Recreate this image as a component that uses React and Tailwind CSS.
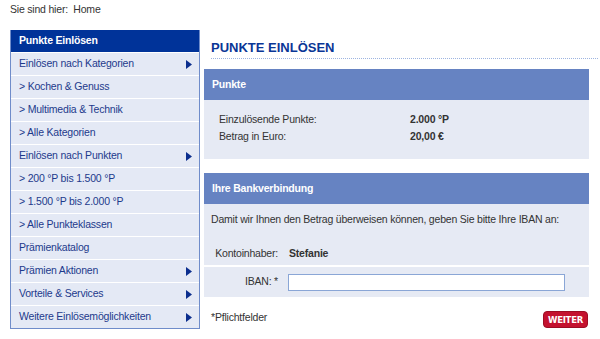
import React from 'react';

const menu = [
    { label: 'Einlösen nach Kategorien', arrow: true },
    { label: '> Kochen & Genuss' },
    { label: '> Multimedia & Technik' },
    { label: '> Alle Kategorien' },
    { label: 'Einlösen nach Punkten', arrow: true },
    { label: '> 200 °P bis 1.500 °P' },
    { label: '> 1.500 °P bis 2.000 °P' },
    { label: '> Alle Punkteklassen' },
    { label: 'Prämienkatalog' },
    { label: 'Prämien Aktionen', arrow: true },
    { label: 'Vorteile & Services', arrow: true },
    { label: 'Weitere Einlösemöglichkeiten', arrow: true },
];

const Arrow = () => (
    <svg width="6" height="9" viewBox="0 0 6 9" className="shrink-0">
        <path d="M0 0 L6 4.5 L0 9 Z" fill="#0b2e8e" />
    </svg>
);

const Sidebar = () => (
    <div className="w-[190px] shrink-0 border border-t-0 border-[#6f8cca]">
        <div className="h-[22px] bg-[#003399] pl-[8px] flex items-center text-white font-bold">
            Punkte Einlösen
        </div>
        {menu.map((item) => (
            <div
                key={item.label}
                className="h-[23px] border-t border-white bg-[#e4e9f5] pl-[8px] pr-[7px] flex items-center justify-between text-[#1d3a8c]"
            >
                <span>{item.label}</span>
                {item.arrow && <Arrow />}
            </div>
        ))}
    </div>
);

const PanelHeader = ({ children }) => (
    <div className="h-[31px] bg-[#6683c2] pl-[8px] flex items-center text-white font-bold">
        {children}
    </div>
);

export default function App() {
    return (
        <div className="w-[600px] h-[339px] bg-white pl-[10px] pr-[2px] text-[10.5px] tracking-[-0.2px] text-[#333] font-['Liberation_Sans',Arial,sans-serif] overflow-hidden">
            <div className="h-[18px] leading-[18px]">Sie sind hier:&nbsp;&nbsp;Home</div>
            <div className="mt-[12px] flex gap-[4px]">
                <Sidebar />
                <div className="flex-1">
                    <div className="ml-[7px] pt-[10px] pb-[2px] border-b border-dotted border-[#9db4e0]">
                        <h1 className="text-[13px] leading-[16px] tracking-normal font-bold text-[#0a3696]">PUNKTE EINLÖSEN</h1>
                    </div>

                    <div className="mt-[10px] w-[385px]">
                        <PanelHeader>Punkte</PanelHeader>
                        <div className="bg-[#e6eaf4] pl-[15px] pt-[11px] pb-[14px]">
                            <div className="flex leading-[17px]">
                                <span className="w-[191px]">Einzulösende Punkte:</span>
                                <span className="font-bold">2.000 °P</span>
                            </div>
                            <div className="flex leading-[17px]">
                                <span className="w-[191px]">Betrag in Euro:</span>
                                <span className="font-bold">20,00 €</span>
                            </div>
                        </div>
                    </div>

                    <div className="mt-[14px] w-[385px]">
                        <PanelHeader>Ihre Bankverbindung</PanelHeader>
                        <div className="bg-[#e6eaf4]">
                            <div className="pl-[7px] pt-[7px] leading-[17px] whitespace-nowrap">
                                Damit wir Ihnen den Betrag überweisen können, geben Sie bitte Ihre IBAN an:
                            </div>
                            <div className="mt-[14px] h-[23px] flex items-center pl-[9px]">
                                <span className="w-[65px] text-right">Kontoinhaber:</span>
                                <span className="ml-[11px] font-bold">Stefanie</span>
                            </div>
                            <div className="h-[32px] border-t-2 border-white flex items-center pl-[9px]">
                                <span className="w-[65px] text-right">IBAN: *</span>
                                <input
                                    type="text"
                                    className="ml-[10px] w-[277px] h-[17px] bg-white border border-[#8aa6d6] outline-none"
                                />
                            </div>
                        </div>
                    </div>

                    <div className="mt-[13px] w-[385px] flex justify-between items-start">
                        <span className="pl-[7px] leading-[14px]">*Pflichtfelder</span>
                        <button className="mt-[1px] mr-[1px] w-[45px] h-[17px] rounded-[4px] bg-[#c4122f] border border-[#9c0d24] text-white font-bold text-[9.5px] tracking-[-0.3px] leading-none font-['DejaVu_Sans_Condensed','Liberation_Sans',sans-serif] flex items-center justify-center">
                            WEITER
                        </button>
                    </div>
                </div>
            </div>
        </div>
    );
}
